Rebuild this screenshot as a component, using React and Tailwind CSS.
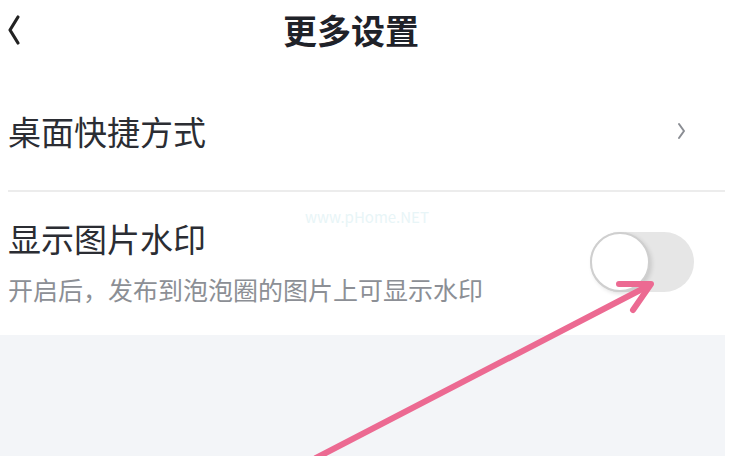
import React from "react";

export default function App() {
  return (
    <div
      className="relative w-[741px] h-[456px] bg-white overflow-hidden"
      style={{ fontFamily: '"Noto Sans CJK SC", "Noto Sans", sans-serif' }}
    >
      <div className="w-[725px] h-full flex flex-col">
        {/* Header */}
        <div className="h-[60px] flex items-center shrink-0">
          <svg className="ml-[7px]" width="14" height="32" viewBox="0 0 14 32">
            <path d="M11 3 L3 16 L11 29" fill="none" stroke="#222" strokeWidth="3.2" strokeLinecap="round" strokeLinejoin="round" />
          </svg>
          <div className="ml-[262px] text-[34px] leading-none font-bold text-[#1f2229]">更多设置</div>
        </div>

        {/* Row 1 */}
        <div className="h-[130px] pt-[12px] flex items-center justify-between shrink-0">
          <div className="pl-[8px] text-[33px] leading-none text-[#2b2d33]">桌面快捷方式</div>
          <svg className="mr-[38px]" width="10" height="18" viewBox="0 0 10 18">
            <path d="M2 2 L7 9 L2 16" fill="none" stroke="#8a8d93" strokeWidth="2" strokeLinecap="round" strokeLinejoin="round" />
          </svg>
        </div>

        <div className="ml-[8px] h-[2px] bg-[#ececec] shrink-0" />

        {/* Row 2 */}
        <div className="h-[143px] flex items-start justify-between shrink-0 relative">
          <div className="pl-[8px] pt-[30px] flex flex-col">
            <div className="text-[33px] leading-none text-[#2b2d33]">显示图片水印</div>
            <div className="mt-[22px] text-[25px] leading-none text-[#8c8f95]">开启后，发布到泡泡圈的图片上可显示水印</div>
          </div>
          <div className="mr-[31px] mt-[40px] w-[104px] h-[60px] rounded-full bg-[#e6e6e6] flex items-center">
            <div className="w-[60px] h-[60px] rounded-full bg-white border-[2px] border-[#cfcfcf] shadow-[2px_2px_4px_rgba(0,0,0,0.12)]" />
          </div>
          <div className="absolute left-[305px] top-[17px] text-[15px] leading-none text-[#e8f5f7]">www.pHome.NET</div>
        </div>

        {/* Gray area */}
        <div className="flex-1 bg-[#f3f5f8]" />
      </div>

      {/* Pink arrow overlay */}
      <svg className="absolute left-0 top-0 pointer-events-none" width="741" height="456" viewBox="0 0 741 456">
        <path d="M316 458 L648 286" fill="none" stroke="#ec6a92" strokeWidth="6" strokeLinecap="round" />
        <path d="M619 284 L651 284 L633 310" fill="none" stroke="#ec6a92" strokeWidth="6" strokeLinecap="round" strokeLinejoin="round" />
      </svg>
    </div>
  );
}
